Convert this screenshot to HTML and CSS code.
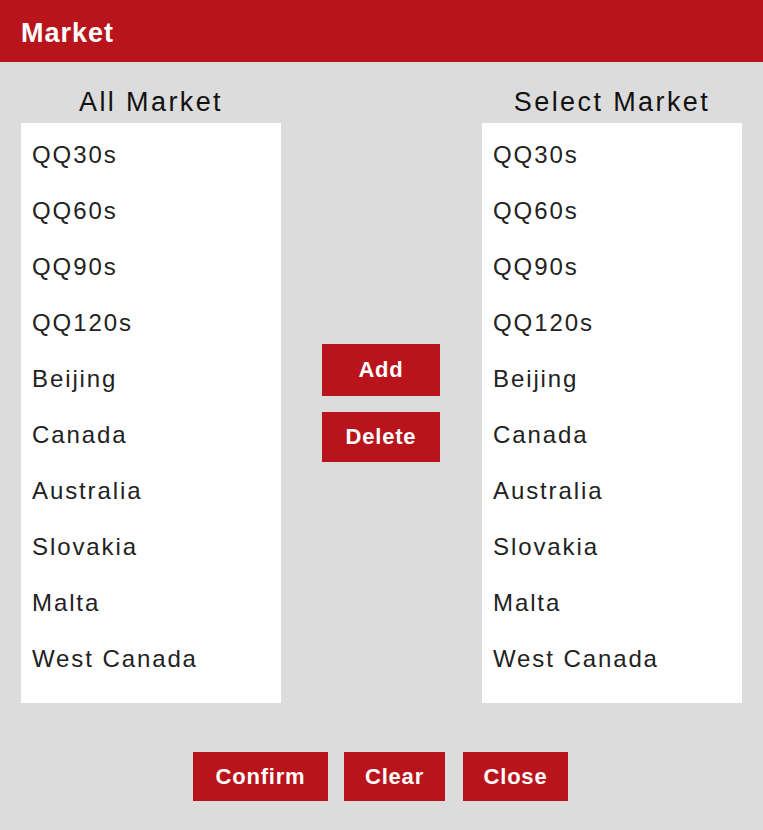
FILE: index.html
```html
<!DOCTYPE html>
<html>
<head>
<meta charset="utf-8">
<title>Market</title>
<link rel="stylesheet" href="styles.css">
</head>
<body>
<div class="dialog">
  <header class="titlebar">Market</header>
  <main class="panes">
    <section class="pane">
      <h2 class="pane-title">All Market</h2>
      <ul class="list">
        <li>QQ30s</li>
        <li>QQ60s</li>
        <li>QQ90s</li>
        <li>QQ120s</li>
        <li>Beijing</li>
        <li>Canada</li>
        <li>Australia</li>
        <li>Slovakia</li>
        <li>Malta</li>
        <li>West Canada</li>
      </ul>
    </section>
    <div class="actions">
      <button class="btn btn-add">Add</button>
      <button class="btn btn-delete">Delete</button>
    </div>
    <section class="pane">
      <h2 class="pane-title">Select Market</h2>
      <ul class="list">
        <li>QQ30s</li>
        <li>QQ60s</li>
        <li>QQ90s</li>
        <li>QQ120s</li>
        <li>Beijing</li>
        <li>Canada</li>
        <li>Australia</li>
        <li>Slovakia</li>
        <li>Malta</li>
        <li>West Canada</li>
      </ul>
    </section>
  </main>
  <footer class="footer">
    <button class="btn btn-confirm">Confirm</button>
    <button class="btn btn-clear">Clear</button>
    <button class="btn btn-close">Close</button>
  </footer>
</div>
</body>
</html>
```

FILE: styles.css
```css
html, body {
  margin: 0;
  padding: 0;
  background: #dcdcdc;
  font-family: "Liberation Sans", Arial, sans-serif;
}

.dialog {
  width: 763px;
  height: 830px;
  background: #dcdcdc;
}

.titlebar {
  height: 62px;
  background: #b9141b;
  color: #fff;
  font-weight: bold;
  font-size: 27px;
  letter-spacing: 1px;
  line-height: 66px;
  padding-left: 21px;
  box-sizing: border-box;
}

.panes {
  display: flex;
  justify-content: space-between;
  padding: 25px 21px 0;
}

.pane {
  width: 260px;
  display: flex;
  flex-direction: column;
}

.pane-title {
  margin: 0 0 6px;
  font-size: 27px;
  font-weight: normal;
  letter-spacing: 2.4px;
  line-height: 30px;
  text-align: center;
  color: #111;
}

.list {
  list-style: none;
  margin: 0;
  padding: 4px 0 0 11px;
  height: 580px;
  box-sizing: border-box;
  background: #fff;
}

.list li {
  font-size: 24px;
  line-height: 56px;
  height: 56px;
  letter-spacing: 1.9px;
  color: #222;
}

.actions {
  display: flex;
  flex-direction: column;
  gap: 16px;
  padding-top: 257px;
  margin-right: 1px;
}

.btn {
  border: none;
  background: #b9141b;
  color: #fff;
  font-family: "Liberation Sans", Arial, sans-serif;
  font-weight: bold;
  font-size: 22px;
  letter-spacing: 0.8px;
  padding: 0;
  cursor: pointer;
}

.btn-add {
  width: 118px;
  height: 52px;
}

.btn-delete {
  width: 118px;
  height: 50px;
}

.footer {
  display: flex;
  justify-content: center;
  gap: 16px;
  padding-top: 49px;
  padding-right: 2px;
}

.footer .btn {
  height: 49px;
}

.btn-confirm { width: 135px; }
.btn-clear { width: 101px; }
.btn-close { width: 105px; margin-left: 2px; }
```
